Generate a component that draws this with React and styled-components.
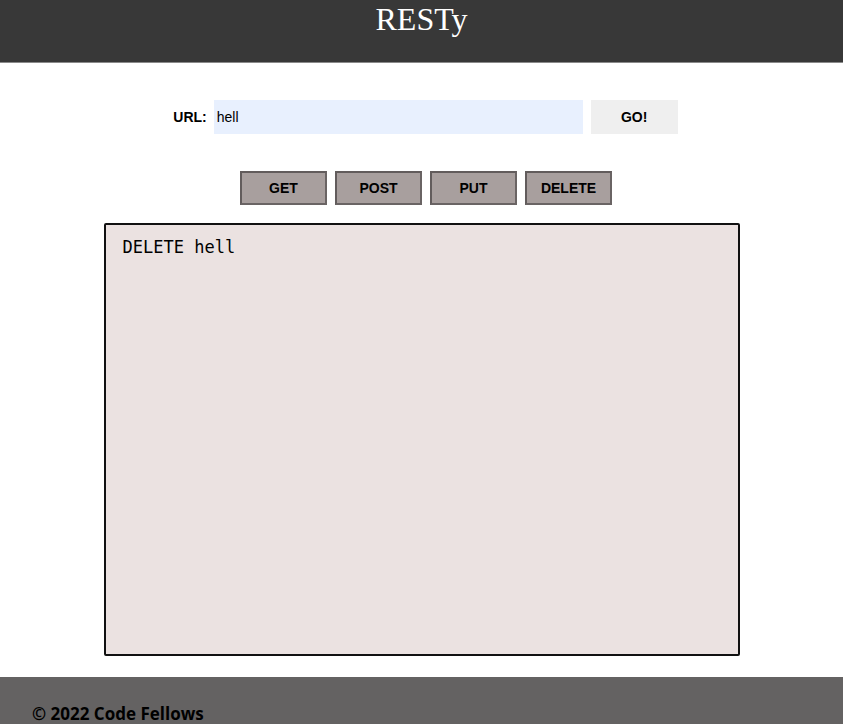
import styled, { createGlobalStyle } from "styled-components";

const GlobalStyle = createGlobalStyle`
    * {
        box-sizing: border-box;
    }
    body {
        margin: 0;
        background: #ffffff;
        font-family: "Liberation Sans", Arial, sans-serif;
    }
`;

const SHeader = styled.header`
    height: 63px;
    background: #383838;
    border-bottom: 1px solid #8a8a8a;
    text-align: center;

    h1 {
        margin: 0;
        font-family: "Liberation Serif", "Times New Roman", serif;
        font-weight: normal;
        font-size: 32px;
        line-height: 38px;
        color: #ffffff;
    }
`;

const SMain = styled.main`
    padding-top: 37px;
    display: flex;
    flex-direction: column;
    align-items: center;
`;

const SForm = styled.form`
    display: flex;
    align-items: center;
    margin-left: 8px;

    label {
        font-size: 14px;
        font-weight: bold;
        margin-right: 7px;
    }
`;

const SInput = styled.input`
    width: 369px;
    height: 34px;
    border: none;
    outline: none;
    padding: 0 3px;
    background: #e8f0fe;
    font-family: "Liberation Sans", Arial, sans-serif;
    font-size: 14px;
    color: #000000;
`;

const SGo = styled.button`
    width: 87px;
    height: 34px;
    margin-left: 8px;
    border: none;
    background: #efefef;
    font-family: "Liberation Sans", Arial, sans-serif;
    font-size: 14px;
    font-weight: bold;
    color: #000000;
`;

const SMethods = styled.div`
    display: flex;
    gap: 8px;
    margin-top: 37px;
    margin-left: 9px;
`;

const SMethod = styled.button`
    width: 87px;
    height: 34px;
    border: 2px solid #6a6464;
    border-top-color: #625c5c;
    border-left-color: #625c5c;
    background: ${(p) => (p.$active ? "#a89f9e" : "#a89f9e")};
    font-family: "Liberation Sans", Arial, sans-serif;
    font-size: 14px;
    font-weight: bold;
    color: #000000;
    padding: 0;
`;

const SOutput = styled.section`
    width: 636px;
    height: 433px;
    margin-top: 18px;
    border: 2px solid #111111;
    border-radius: 2px;
    background: #ebe2e1;
    padding: 11px 17px;

    pre {
        margin: 0;
        font-family: "DejaVu Sans Mono", "Liberation Mono", monospace;
        font-size: 17px;
        line-height: 22px;
        color: #000000;
    }
`;

const SFooter = styled.footer`
    margin-top: 21px;
    height: 60px;
    background: #646262;
    padding: 25px 0 0 32px;

    p {
        margin: 0;
        font-family: "Open Sans", sans-serif;
        font-weight: bold;
        font-size: 17px;
        color: #000000;
    }
`;

const methods = ["GET", "POST", "PUT", "DELETE"];

function App() {
    const url = "hell";
    const method = "DELETE";
    return (
        <>
            <GlobalStyle />
            <SHeader>
                <h1>RESTy</h1>
            </SHeader>
            <SMain>
                <SForm onSubmit={(e) => e.preventDefault()}>
                    <label>URL:</label>
                    <SInput defaultValue={url} />
                    <SGo type="submit">GO!</SGo>
                </SForm>
                <SMethods>
                    {methods.map((m) => (
                        <SMethod key={m} type="button" $active={m === method}>
                            {m}
                        </SMethod>
                    ))}
                </SMethods>
                <SOutput>
                    <pre>{method} {url}</pre>
                </SOutput>
            </SMain>
            <SFooter>
                <p>© 2022 Code Fellows</p>
            </SFooter>
        </>
    );
}

export default App;
